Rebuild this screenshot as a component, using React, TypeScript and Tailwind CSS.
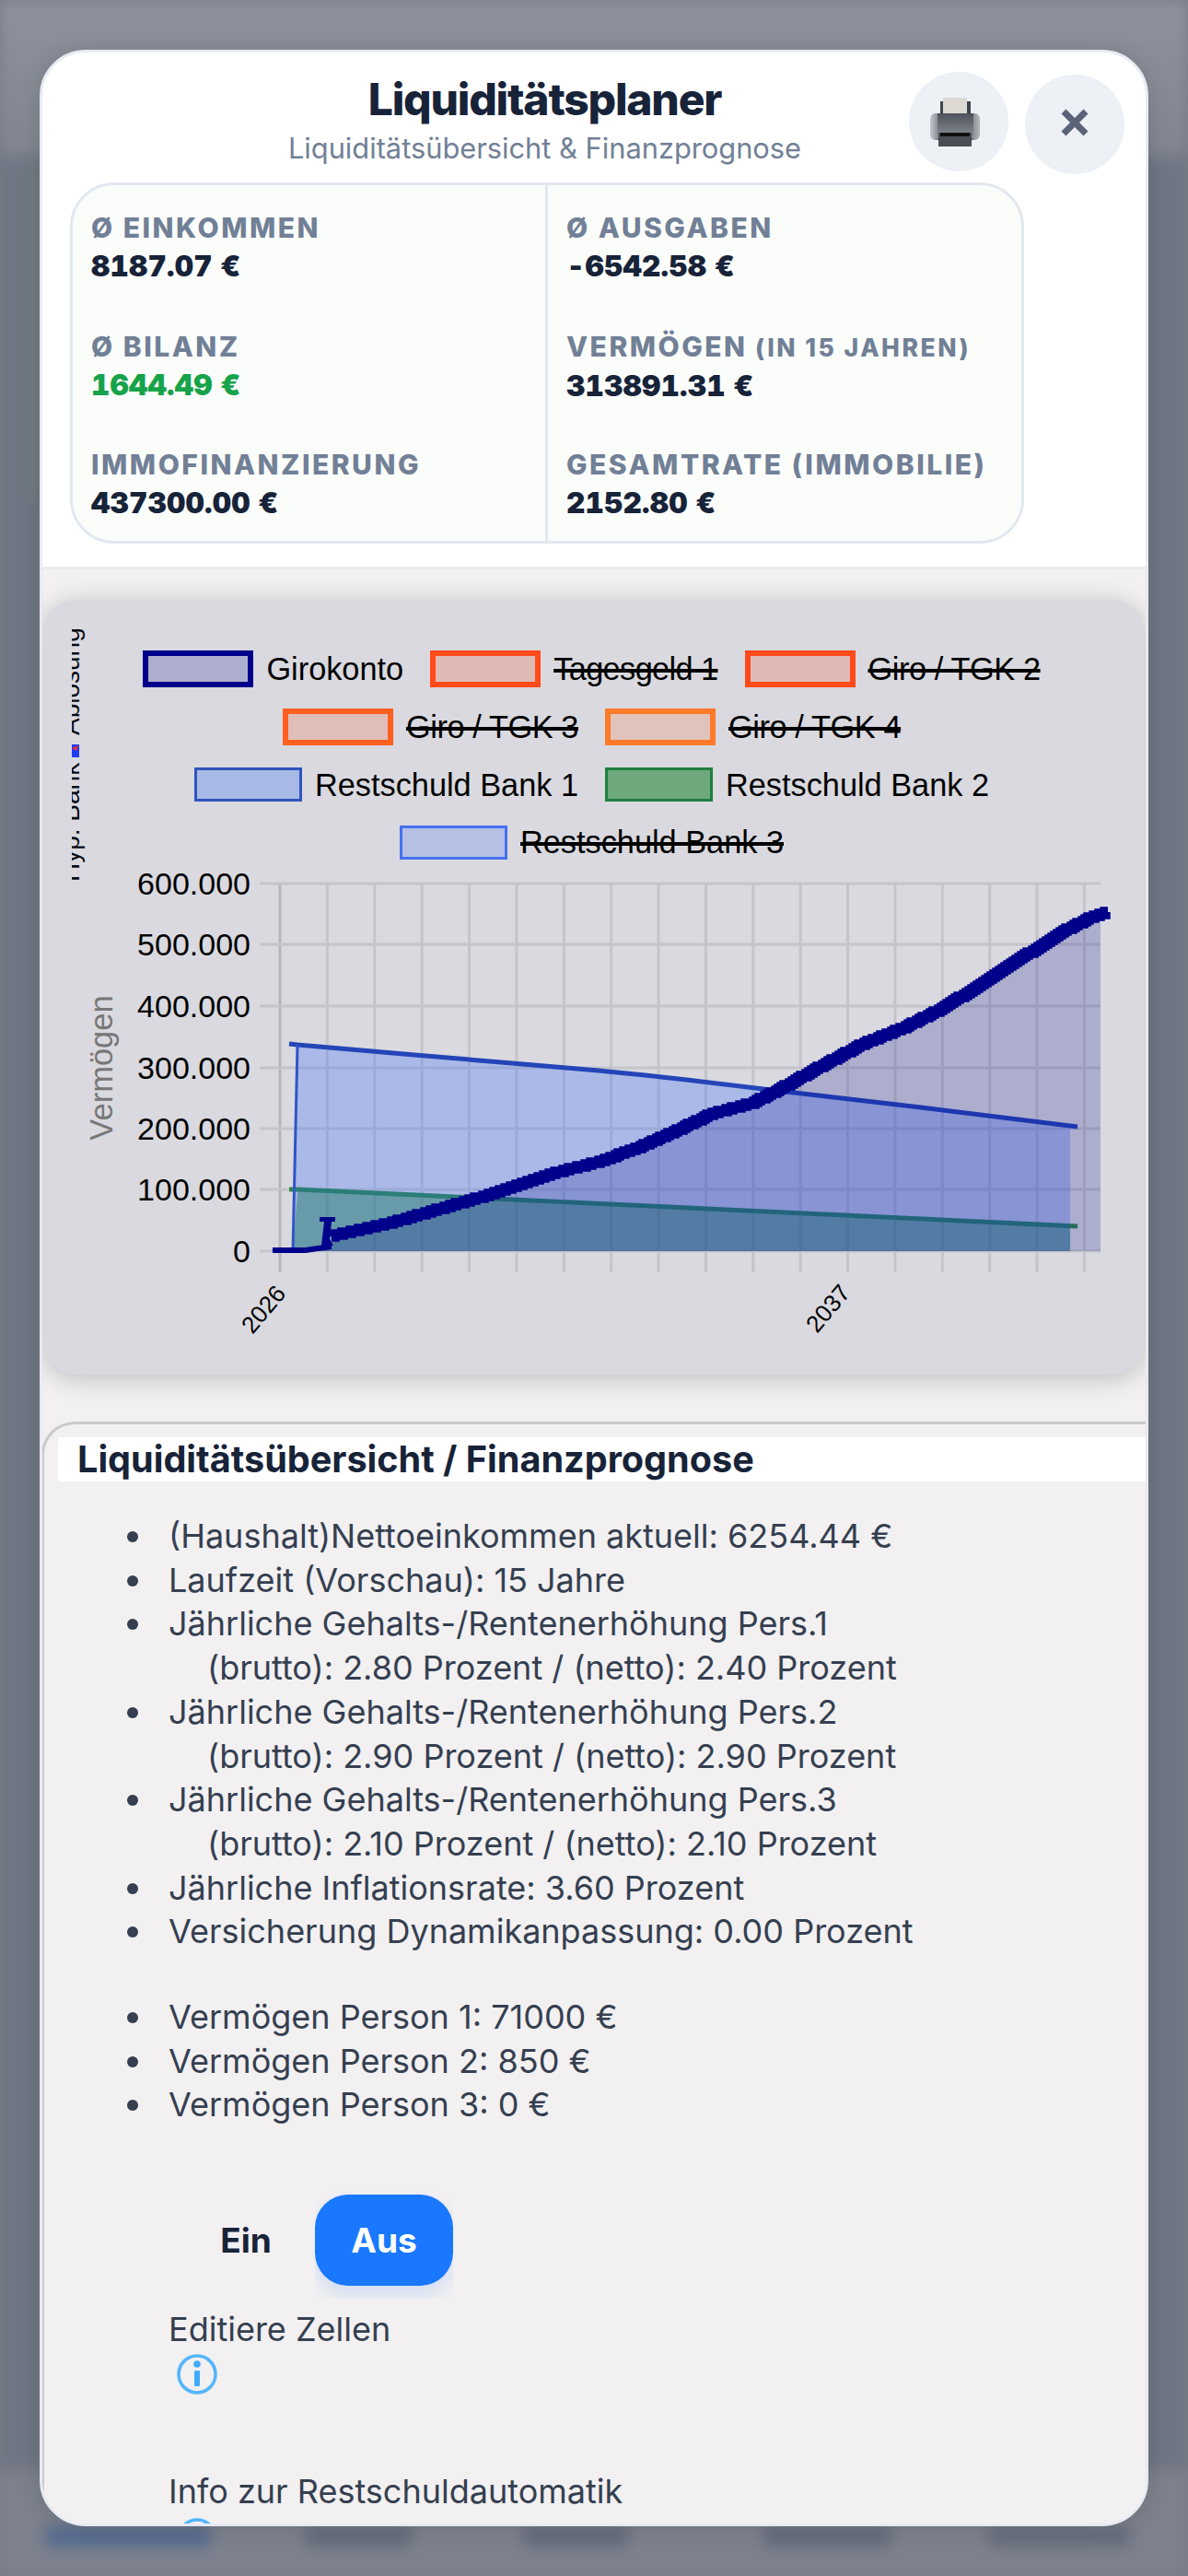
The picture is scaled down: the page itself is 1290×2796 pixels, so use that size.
import React from "react";

const font = { fontFamily: "Inter, 'Noto Sans', sans-serif" };
const chartFont = { fontFamily: "'Liberation Sans', Arial, sans-serif" };

const legendRows = [
  [
    { l: "Girokonto", b: "border-[6px] border-[#00008b] bg-[#aeaece] w-[120px] h-[40px]", s: "" },
    { l: "Tagesgeld 1", b: "border-[6px] border-[#ff4b19] bg-[#dfbab5] w-[120px] h-[40px]", s: "line-through decoration-[3.5px] tracking-[-0.6px]" },
    { l: "Giro / TGK 2", b: "border-[6px] border-[#ff4b19] bg-[#dfbab5] w-[120px] h-[40px]", s: "line-through decoration-[3.5px] tracking-[-0.4px]" },
  ],
  [
    { l: "Giro / TGK 3", b: "border-[6px] border-[#ff5f1f] bg-[#dfbeb9] w-[120px] h-[40px]", s: "line-through decoration-[3.5px] tracking-[-0.4px]" },
    { l: "Giro / TGK 4", b: "border-[6px] border-[#ff7a2a] bg-[#e0c4bb] w-[120px] h-[40px]", s: "line-through decoration-[3.5px] tracking-[-0.4px]" },
  ],
  [
    { l: "Restschuld Bank 1", b: "border-[3px] border-[#2f55bd] bg-[#a9b9e6] w-[117px] h-[37px]", s: "" },
    { l: "Restschuld Bank 2", b: "border-[3px] border-[#1f7f3f] bg-[#6ea87d] w-[117px] h-[37px]", s: "" },
  ],
  [{ l: "Restschuld Bank 3", b: "border-[3px] border-[#4670f0] bg-[#b5c0e4] w-[117px] h-[37px]", s: "line-through decoration-[3.5px]" }],
];

const giro: [number, number][] = [
  [360, 1341], [420, 1328], [460, 1317], [512, 1302], [552, 1290], [601, 1273], [650, 1261], [691, 1246], [732, 1228],
  [772, 1209], [817, 1197], [846, 1182], [891, 1157], [936, 1133], [977, 1117], [1017, 1097], [1058, 1073], [1111, 1038],
  [1156, 1010], [1181, 997], [1203, 990],
];

function yAt(x: number) {
  for (let i = 0; i < giro.length - 1; i++) {
    const [a, b] = giro[i];
    const [c, d] = giro[i + 1];
    if (x <= c) return b + ((x - a) / (c - a)) * (d - b);
  }
  return 990;
}

function stairs() {
  const pts: string[] = [];
  for (let x = 360; x <= 1200; x += 3) {
    const y = Math.round(yAt(x) / 2) * 2;
    pts.push(`${x},${y}`);
    pts.push(`${x + 3},${y}`);
  }
  return pts.join(" ");
}
const giroLine = stairs();
const giroFill = `295,1358 295,1356 332,1356 359,1353 ${giro.filter((p) => p[0] <= 1181).map((p) => p.join(",")).join(" ")} 1195,990 1195,1358`;

const blueTop = "323,1134 450,1145 550,1153.5 650,1162 700,1167 750,1172.5 854,1185 1000,1202";

const yLabels = [
  ["600.000", 959],
  ["500.000", 1025],
  ["400.000", 1092],
  ["300.000", 1159],
  ["200.000", 1225],
  ["100.000", 1291],
  ["0", 1358],
] as [string, number][];

const vLines = Array.from({ length: 18 }, (_, i) => 304 + i * 51.38);

function Chart() {
  return (
    <svg viewBox="47 946 1196 546" className="block w-[1196px] h-[546px]" style={chartFont}>
      {vLines.map((x, i) => (
        <line key={i} x1={x} x2={x} y1={959} y2={1381} stroke={i === 0 ? "#b6b6bc" : "#c4c4ca"} strokeWidth={3} />
      ))}
      {yLabels.map(([t, y]) => (
        <line key={t} x1={282} x2={1195} y1={y} y2={y} stroke="#c4c4ca" strokeWidth={3} />
      ))}
      {yLabels.map(([t, y]) => (
        <text key={t} x={272} y={y + 12} fontSize={34} textAnchor="end" fill="#000">
          {t}
        </text>
      ))}
      <text transform="rotate(-90 122 1159)" x={122} y={1159} fontSize={34.5} textAnchor="middle" fill="#777">
        Vermögen
      </text>
      <text transform="rotate(-50 286 1421)" x={286} y={1421} fontSize={26} textAnchor="middle" dominantBaseline="central" fill="#000">
        2026
      </text>
      <text transform="rotate(-50 899 1420)" x={899} y={1420} fontSize={26} textAnchor="middle" dominantBaseline="central" fill="#000">
        2037
      </text>

      {/* Restschuld Bank 2 */}
      <polygon points="318,1358 323,1293 1162,1331 1162,1358" fill="rgb(22,128,45)" fillOpacity={0.45} />
      <polyline points="314,1291 323,1291 1170,1331" fill="none" stroke="#2f8a4a" strokeWidth={5} />
      {/* Restschuld Bank 1 */}
      <polygon points={`318,1358 ${blueTop} 1162,1222 1162,1358`} fill="rgb(30,90,255)" fillOpacity={0.25} />
      <polyline points={`314,1133 ${blueTop} 1170,1223`} fill="none" stroke="#2445b8" strokeWidth={5} />
      <line x1={318} y1={1358} x2={323} y2={1134} stroke="#2f55c8" strokeWidth={3} />
      {/* Girokonto */}
      <polygon points={giroFill} fill="rgb(0,0,139)" fillOpacity={0.2} />
      <polyline points={giroLine} fill="none" stroke="#00008b" strokeWidth={11.5} />
      <polyline points="296,1357 332,1357 345,1355 360,1353" fill="none" stroke="#00008b" strokeWidth={6} />
      <polygon points="352,1326 360,1326 358,1345 362,1352 349,1352" fill="#00008b" />
      <rect x={347} y={1321} width={17} height={5} fill="#00008b" />
    </svg>
  );
}

function Printer() {
  return (
    <svg viewBox="0 0 54 53" className="w-[54px] h-[53px] -translate-x-[4px]">
      <defs>
        <linearGradient id="pb" x1="0" x2="1" y1="0" y2="0">
          <stop offset="0" stopColor="#c5c9cd" />
          <stop offset="0.14" stopColor="#8f949a" />
          <stop offset="0.16" stopColor="#4e535c" />
          <stop offset="0.85" stopColor="#585d66" />
          <stop offset="0.87" stopColor="#8f949a" />
          <stop offset="1" stopColor="#b3b7bc" />
        </linearGradient>
        <linearGradient id="pc" x1="0" x2="0" y1="0" y2="1">
          <stop offset="0" stopColor="#4d525b" />
          <stop offset="1" stopColor="#8b8f96" />
        </linearGradient>
      </defs>
      <rect x="11" y="4" width="33" height="16" fill="#3e424a" />
      <rect x="14" y="0" width="26" height="19" fill="#dcd9d3" />
      <rect x="0" y="17" width="54" height="29" rx="6" fill="url(#pb)" />
      <rect x="8" y="17" width="39" height="27" fill="url(#pc)" />
      <rect x="9" y="38" width="36" height="15" fill="#4b4e55" />
      <rect x="11" y="38" width="32" height="4" fill="#111" />
    </svg>
  );
}

function Info() {
  return (
    <svg viewBox="0 0 44 44" className="block w-[44px] h-[44px]">
      <circle cx="22" cy="22" r="20" fill="none" stroke="#55b5fb" strokeWidth="3.6" />
      <circle cx="22" cy="11" r="3.8" fill="#3fabfb" />
      <rect x="19" y="18" width="6" height="17" rx="1" fill="#3fabfb" />
    </svg>
  );
}

function Stat({ label, small, value, green, right }: { label: string; small?: string; value: string; green?: boolean; right?: boolean }) {
  return (
    <div className={`pt-[26px] pl-[20px] ${right ? "border-l-[3px] border-[#e2e8f0]" : ""}`}>
      <div className="text-[30px] leading-[40px] font-extrabold tracking-[2.5px] text-[#718096] uppercase whitespace-nowrap">
        {label}
        {small && <span className="text-[26.5px]"> {small}</span>}
      </div>
      <div className={`text-[31.5px] leading-[44px] font-black tabular-nums tracking-[0.2px] ${green ? "text-[#16a34a]" : "text-[#172338]"}`}>{value}</div>
    </div>
  );
}

function Li({ children }: { children: React.ReactNode }) {
  return (
    <li className="flex">
      <span className="shrink-0 w-[12px] h-[12px] rounded-full bg-[#353f50] mt-[18px] mr-[33px]" />
      <div>{children}</div>
    </li>
  );
}

export default function App() {
  return (
    <div className="relative w-[1290px] h-[2796px] overflow-hidden bg-[#777c88]" style={font}>
      {/* blurred page behind the dialog */}
      <div className="absolute inset-0 flex flex-col blur-[8px]">
        <div className="h-[170px] bg-gradient-to-b from-[#8f929c] to-[#80858f]" />
        <div className="flex-1 bg-[#6f7582] pl-[30px] pt-[10px]">
          <div className="w-[12px] h-[360px] bg-[#727f80]" />
        </div>
        <div className="h-[116px] bg-[#7d818c] flex items-start pt-[62px]">
          <div className="ml-[49px] w-[180px] h-[22px] bg-[#53698e]" />
          <div className="ml-[102px] w-[116px] h-[22px] bg-[#616978]" />
          <div className="ml-[121px] w-[114px] h-[22px] bg-[#616978]" />
          <div className="ml-[147px] w-[139px] h-[22px] bg-[#616978]" />
          <div className="ml-[105px] w-[154px] h-[22px] bg-[#646a79]" />
        </div>
      </div>

      {/* dialog */}
      <div className="absolute left-[43px] top-[54px] w-[1204px] h-[2688px] rounded-[50px] border-[3px] border-[#e7eaf2] bg-white overflow-hidden flex flex-col shadow-[0_0_24px_rgba(0,0,0,0.12)]">
        <div className="relative shrink-0 border-b-[3px] border-[#e8ebf2] h-[561px]">
          <div className="w-[1091px] flex flex-col items-center pt-[22px]">
            <div className="text-[48px] leading-[58px] font-extrabold tracking-[-1.2px] text-[#172338]">Liquiditätsplaner</div>
            <div className="text-[30.8px] leading-[40px] text-[#718096] mt-[4px]">Liquiditätsübersicht &amp; Finanzprognose</div>
          </div>
          <div className="ml-[30px] mt-[17px] w-[1036px] h-[392px] rounded-[48px] border-[3px] border-[#e2e8f0] bg-[#fbfdfb] grid grid-cols-[513px_1fr] grid-rows-3 overflow-hidden">
            <Stat label="Ø Einkommen" value="8187.07 €" />
            <Stat right label="Ø Ausgaben" value="-6542.58 €" />
            <Stat label="Ø Bilanz" value="1644.49 €" green />
            <Stat right label="Vermögen" small="(in 15 Jahren)" value="313891.31 €" />
            <Stat label="Immofinanzierung" value="437300.00 €" />
            <Stat right label="Gesamtrate (Immobilie)" value="2152.80 €" />
          </div>
          <button className="absolute left-[941px] top-[21px] w-[108px] h-[108px] rounded-full bg-[#edf0f5] flex items-center justify-center">
            <Printer />
          </button>
          <button className="absolute left-[1067px] top-[24px] w-[108px] h-[108px] rounded-full bg-[#edf0f5] flex items-center justify-center">
            <svg viewBox="0 0 30 30" className="w-[30px] h-[30px] -translate-y-[2px]">
              <path d="M3 3 L27 27 M27 3 L3 27" stroke="#5a6378" strokeWidth="7" fill="none" />
            </svg>
          </button>
        </div>

        <div className="flex-1 min-h-0 bg-[#f2f0f1] pt-[33px]">
          <div className="relative ml-[1px] w-[1196px] h-[841px] rounded-[36px] bg-[#d9d9df] shadow-[0_4px_28px_rgba(0,0,0,0.22)] pt-[44px]">
            <svg viewBox="78 680 20 280" className="absolute left-[31px] top-[29px] w-[20px] h-[280px]" style={chartFont}>
              <text transform="rotate(-90 86 957)" x={86} y={957} fontSize={28} fill="#0b0b14">Hyp. Bank</text>
              <text transform="rotate(-90 86 798)" x={86} y={798} fontSize={28} fill="#0b0b14">Ablösung</text>
              <rect x={78} y={808} width={8} height={14} fill="#1d3bf0" />
              <path d="M78 812 L85 809 L83 815 Z" fill="#e8303a" />
            </svg>
            <div className="pr-[5px]" style={chartFont}>
              {legendRows.map((r, i) => (
                <div key={i} className="h-[62.67px] flex items-center justify-center gap-[29px]">
                  {r.map((it) => (
                    <div key={it.l} className="flex items-center gap-[14px]">
                      <div className={it.b} />
                      <span className={`text-[34.3px] leading-[40px] text-black whitespace-nowrap ${it.s}`}>{it.l}</span>
                    </div>
                  ))}
                </div>
              ))}
            </div>
            <Chart />
          </div>

          <div className="ml-[-1px] mt-[51px] h-[1200px] w-[1300px] rounded-tl-[36px] border-t-[3px] border-l-[3px] border-[#cacacc] bg-[#f2f0f1] pt-[14px]">
            <div className="ml-[15px] h-[48px] bg-white pl-[21px] text-[39.6px] leading-[48px] font-bold text-[#172338]">
              Liquiditätsübersicht / Finanzprognose
            </div>
            <div className="pl-[135px] text-[36px] leading-[47.7px] text-[#353f50]">
              <ul className="-ml-[45px] mt-[36px]">
                <Li>(Haushalt)Nettoeinkommen aktuell: 6254.44 €</Li>
                <Li>Laufzeit (Vorschau): 15 Jahre</Li>
                <Li>
                  Jährliche Gehalts-/Rentenerhöhung Pers.1
                  <div className="pl-[42px]">(brutto): 2.80 Prozent / (netto): 2.40 Prozent</div>
                </Li>
                <Li>
                  Jährliche Gehalts-/Rentenerhöhung Pers.2
                  <div className="pl-[42px]">(brutto): 2.90 Prozent / (netto): 2.90 Prozent</div>
                </Li>
                <Li>
                  Jährliche Gehalts-/Rentenerhöhung Pers.3
                  <div className="pl-[42px]">(brutto): 2.10 Prozent / (netto): 2.10 Prozent</div>
                </Li>
                <Li>Jährliche Inflationsrate: 3.60 Prozent</Li>
                <Li>Versicherung Dynamikanpassung: 0.00 Prozent</Li>
              </ul>
              <ul className="-ml-[45px] mt-[45px]">
                <Li>Vermögen Person 1: 71000 €</Li>
                <Li>Vermögen Person 2: 850 €</Li>
                <Li>Vermögen Person 3: 0 €</Li>
              </ul>
              <div className="ml-[9px] mt-[73px] flex text-[37px] font-bold">
                <div className="w-[150px] h-[99px] flex items-center justify-center text-[#172338]">Ein</div>
                <div className="w-[150px] h-[99px] flex items-center justify-center rounded-[36px] bg-[#1a78ff] text-white shadow-[0_10px_20px_rgba(26,120,255,0.15)] [clip-path:inset(-14px_0_-14px_0)]">
                  Aus
                </div>
              </div>
              <div className="mt-[24px]">Editiere Zellen</div>
              <div className="ml-[9px] mt-[2px]"><Info /></div>
              <div className="mt-[82px]">Info zur Restschuldautomatik</div>
              <div className="ml-[9px] mt-[4px]"><Info /></div>
            </div>
          </div>
        </div>
      </div>
    </div>
  );
}
